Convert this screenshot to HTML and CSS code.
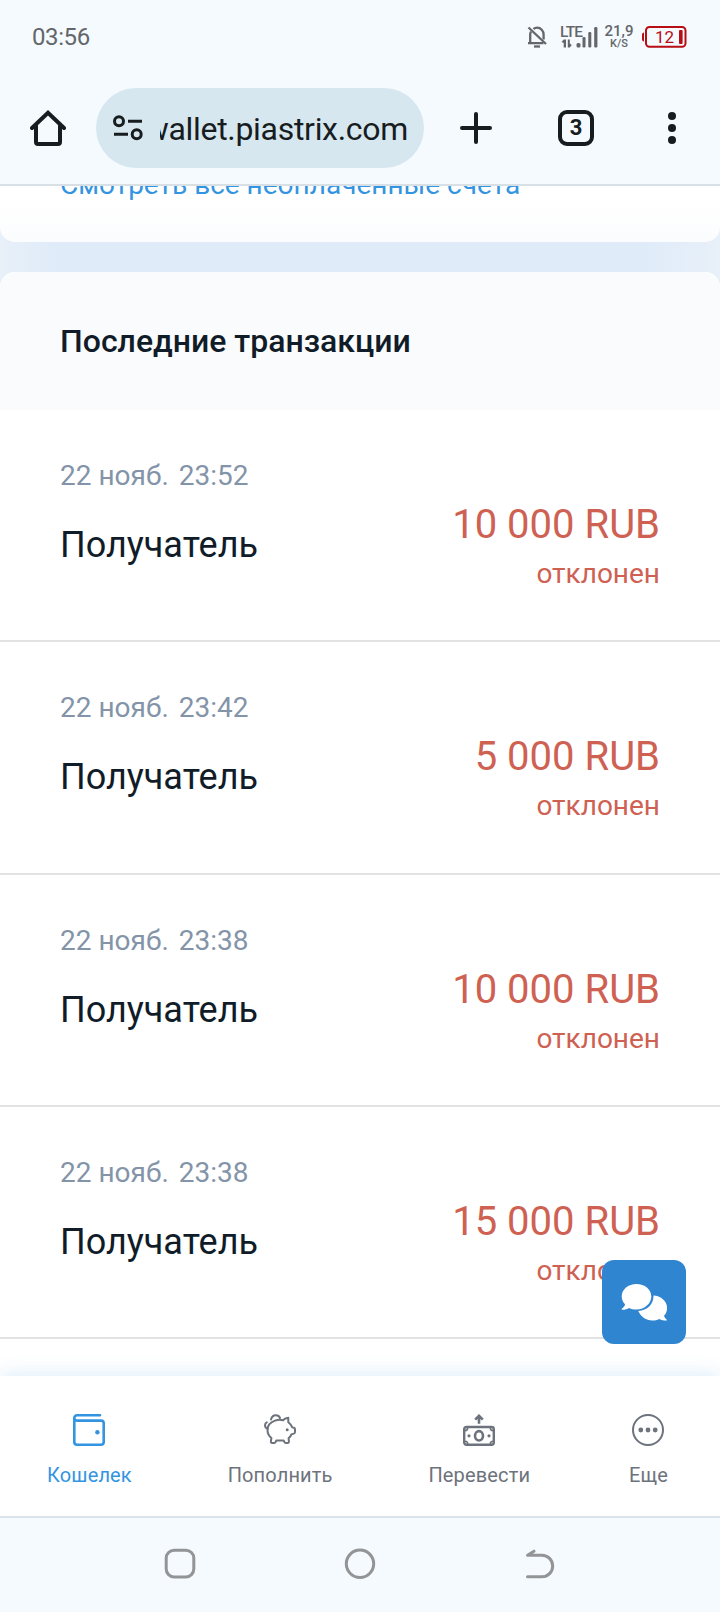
FILE: index.html
```html
<!DOCTYPE html>
<html lang="ru">
<head>
    <meta charset="UTF-8">
    <meta name="viewport" content="width=device-width, initial-scale=1.0">
    <title>Piastrix</title>
    <link rel="stylesheet" href="styles.css">
</head>
<body>
    <div class="phone">
        <div class="status-bar">
            <span class="clock">03:56</span>
            <div class="status-icons">
                <svg class="bell" width="20" height="22" viewBox="0 0 20 22" fill="none" stroke="#646669" stroke-width="2.300">
                    <path d="M1 17.200h15.500M3.200 17V8.500c0-1 .3-2 .8-2.800M6.500 3C7.500 2.200 8.600 1.700 10 1.700c3.800 0 6.600 3 6.600 6.800v5"/>
                    <path d="M1.500 1.500l17.500 16.500"/>
                    <path d="M7 20.500h6"/>
                </svg>
                <div class="lte">
                    <span class="lte-label">LTE</span>
                    <svg width="37" height="22" viewBox="0 0 37 22" fill="#646669">
                        <path d="M2.700 13.500h2.300v8H2.700zM.5 16l2.200-2.500V17zM6.800 13.500h2v8h-2zM8.800 21.500V17.500l2 1.500z"/>
                        <rect x="15.500" y="17" width="4" height="4.500" rx="1.500"/>
                        <rect x="21.500" y="11" width="3" height="10.500" rx="1.200"/>
                        <rect x="27.300" y="6" width="3" height="15.500" rx="1.200"/>
                        <rect x="33.200" y="1" width="3.200" height="20.500" rx="1.200"/>
                    </svg>
                </div>
                <div class="speed">
                    <span class="speed-value">21,9</span>
                    <span class="speed-unit">K/S</span>
                </div>
                <div class="battery">
                    <svg width="46" height="22" viewBox="0 0 46 22" fill="none">
                        <rect x="5" y="1" width="39.500" height="19.800" rx="3.500" stroke="#b80d12" stroke-width="2"/>
                        <path d="M3 6.500C1.500 6.500 1 7.500 1 9v4c0 1.500.5 2.500 2 2.500z" fill="#b80d12"/>
                        <rect x="38" y="4" width="3.600" height="14" rx="1" fill="#b80d12"/>
                    </svg>
                    <span class="battery-level">12</span>
                </div>
            </div>
        </div>

        <div class="toolbar">
            <svg class="home" width="36" height="36" viewBox="0 0 36 36" fill="none" stroke="#171c1f" stroke-width="4" stroke-linejoin="round" stroke-linecap="round">
                <path d="M6 16v16a2 2 0 0 0 2 2h20a2 2 0 0 0 2-2V16" />
                <path d="M2 18L18 2.800 34 18" stroke-linejoin="miter"/>
            </svg>
            <div class="address">
                <svg width="32" height="26" viewBox="0 0 32 26" fill="none" stroke="#171c1f">
                    <circle cx="7" cy="6.300" r="4.500" stroke-width="3"/>
                    <path d="M16 6.300h14M2 19.300h14" stroke-width="3"/>
                    <circle cx="24.700" cy="19.300" r="4.500" stroke-width="3"/>
                </svg>
                <div class="url"><span>wallet.piastrix.com</span></div>
            </div>
            <svg class="plus" width="32" height="32" viewBox="0 0 32 32" stroke="#171c1f" stroke-width="4" stroke-linecap="round">
                <path d="M2 16h28M16 2v28"/>
            </svg>
            <div class="tabs">3</div>
            <svg class="dots" width="8" height="32" viewBox="0 0 8 32" fill="#171c1f">
                <circle cx="4" cy="4" r="4"/>
                <circle cx="4" cy="16" r="4"/>
                <circle cx="4" cy="28" r="4"/>
            </svg>
        </div>

        <div class="content">
            <div class="card invoices">
                <a class="invoices-link">Смотреть все неоплаченные счета</a>
            </div>
            <div class="card transactions">
                <h2>Последние транзакции</h2>
                <div class="row">
                    <div class="info">
                        <div class="date"><span>22 нояб.</span> <span>23:52</span></div>
                        <div class="name">Получатель</div>
                    </div>
                    <div class="sum">
                        <div class="amount">10 000 RUB</div>
                        <div class="state">отклонен</div>
                    </div>
                </div>
                <div class="row">
                    <div class="info">
                        <div class="date"><span>22 нояб.</span> <span>23:42</span></div>
                        <div class="name">Получатель</div>
                    </div>
                    <div class="sum">
                        <div class="amount">5 000 RUB</div>
                        <div class="state">отклонен</div>
                    </div>
                </div>
                <div class="row">
                    <div class="info">
                        <div class="date"><span>22 нояб.</span> <span>23:38</span></div>
                        <div class="name">Получатель</div>
                    </div>
                    <div class="sum">
                        <div class="amount">10 000 RUB</div>
                        <div class="state">отклонен</div>
                    </div>
                </div>
                <div class="row">
                    <div class="info">
                        <div class="date"><span>22 нояб.</span> <span>23:38</span></div>
                        <div class="name">Получатель</div>
                    </div>
                    <div class="sum">
                        <div class="amount">15 000 RUB</div>
                        <div class="state">отклонен</div>
                    </div>
                </div>
            </div>
            <!-- support chat -->
            <div class="chat">
                <svg width="46" height="38" viewBox="0 0 46 38" fill="#fff">
                    <path d="M15.500 1C7.300 1 .7 6.500 .7 13.400c0 3 1.300 5.800 3.400 7.900-.6 2-1.700 3.300-3.100 4.300-.8.6-.4 1.200.5 1.200 2.700 0 4.800-.8 6.600-1.900 2.200 1 4.700 1.500 7.400 1.500 8.200 0 14.800-5.800 14.800-12.900S23.700 1 15.500 1z"/>
                    <path d="M32.500 12.500c.3 9-6 14.700-15.200 15.600 2.500 5.800 7.800 9.400 14 9.400 2.500 0 4.800-.6 6.900-1.600 2.200 1.100 4.400 1.700 7 1.700.8 0 1-.7.400-1.200-1.300-.9-2.200-2-2.600-3.600 2-2.200 3.100-4.900 3.100-7.900 0-6.500-6-12-13.600-12.400z"/>
                </svg>
            </div>
        </div>

        <div class="menu">
            <div class="menu-item active">
                <svg width="32" height="32" viewBox="0 0 32 32" fill="none" stroke="currentColor" stroke-width="2.600" stroke-linecap="round">
                    <path d="M27 1.300H4A2.700 2.700 0 0 0 1.300 4v24A2.700 2.700 0 0 0 4 30.700h24a2.700 2.700 0 0 0 2.700-2.700V9.300A2.700 2.700 0 0 0 28 6.600H4A2.700 2.700 0 0 1 1.300 4"/>
                    <circle cx="24.400" cy="18.200" r="2.200" fill="currentColor" stroke="none"/>
                </svg>
                <span>Кошелек</span>
            </div>
            <div class="menu-item">
                <svg width="32" height="32" viewBox="0 0 32 32" fill="none" stroke="currentColor" stroke-width="2" stroke-linecap="round" stroke-linejoin="round">
                    <path d="M19 6.200c-2.200-.6-5.500-.5-8 .4-4.200 1.400-7.500 4.800-7.500 9.400 0 3.300 1.500 6 3.900 8l-.5 3.200c-.2 1.200.4 1.800 1.400 1.800h1.900c.7 0 1.200-.4 1.500-1.100l.7-1.500h7.200l.7 1.500c.3.700.8 1.100 1.500 1.100h1.700c1 0 1.500-.6 1.400-1.500l-.3-3.300c1.500-1 2.300-2.200 2.800-3.800l2.400-.8c.8-.3 1.200-.8 1.200-1.600v-2.800c0-.8-.4-1.200-1.200-1.400l-1.500-.4c-.9-2.300-2.200-3.900-4-5.200V3.800c-2.300.4-4.200 1.200-5.300 2.400z"/>
                    <path d="M7 5.600C7.700 2.800 9.200 1.300 11.700 1.300c2 0 3.600 1 4.300 2.700"/>
                    <path d="M3.600 14.800C1.800 14.200 1 12.700 1 11.200c0-1.300.6-2.300 1.800-2.900"/>
                    <circle cx="23.200" cy="15.700" r="1.500" fill="currentColor" stroke="none"/>
                </svg>
                <span>Пополнить</span>
            </div>
            <div class="menu-item">
                <svg width="32" height="32" viewBox="0 0 32 32" fill="none" stroke="currentColor" stroke-width="2.400">
                    <rect x="1.200" y="13" width="29.600" height="17.800" rx="2.200"/>
                    <path d="M2 16.600c1.700 0 2.700-1.100 2.700-2.900M30 16.600c-1.700 0-2.700-1.100-2.700-2.900M2 27.200c1.700 0 2.700 1.100 2.700 2.900M30 27.200c-1.700 0-2.700 1.100-2.700 2.900" stroke-width="1.600"/>
                    <ellipse cx="16" cy="21.800" rx="4" ry="4.700" stroke-width="2.600"/>
                    <path d="M16 9.800V2.200M12.200 5.600L16 1.800l3.800 3.800" stroke-width="2.600"/>
                    <circle cx="6" cy="21.800" r="1.600" fill="currentColor" stroke="none"/>
                    <circle cx="26" cy="21.800" r="1.600" fill="currentColor" stroke="none"/>
                </svg>
                <span>Перевести</span>
            </div>
            <div class="menu-item">
                <svg width="32" height="32" viewBox="0 0 32 32" fill="currentColor">
                    <circle cx="16" cy="16" r="15" fill="none" stroke="currentColor" stroke-width="2"/>
                    <circle cx="8.800" cy="16" r="2.400"/>
                    <circle cx="16" cy="16" r="2.400"/>
                    <circle cx="23.200" cy="16" r="2.400"/>
                </svg>
                <span>Еще</span>
            </div>
        </div>

        <div class="system-nav">
            <svg width="32" height="32" viewBox="0 0 32 32" fill="none" stroke="#929496" stroke-width="3">
                <rect x="2.200" y="2.200" width="27.600" height="26.800" rx="8"/>
            </svg>
            <svg width="32" height="32" viewBox="0 0 32 32" fill="none" stroke="#929496" stroke-width="3">
                <circle cx="16" cy="15.800" r="13.700"/>
            </svg>
            <svg width="32" height="32" viewBox="0 0 32 32" fill="none" stroke="#929496" stroke-width="3" stroke-linecap="round" stroke-linejoin="round">
                <path d="M10 3.200L3.500 7.300H18a10.700 10.700 0 0 1 0 21.400H3.500"/>
            </svg>
        </div>
    </div>
</body>
</html>
```
FILE: styles.css
```css
body {
    margin: 0;
    font-family: Roboto, "Liberation Sans", sans-serif;
    background-color: #fff;
}
svg {
    display: block;
    flex-shrink: 0;
}
.phone {
    display: flex;
    flex-direction: column;
    width: 720px;
    height: 1612px;
    overflow: hidden;
}

/* status bar */
.status-bar {
    display: flex;
    justify-content: space-between;
    align-items: center;
    height: 72px;
    padding: 1px 33px 0 32px;
    box-sizing: border-box;
    background-color: #f5faff;
    color: #646669;
}
.clock {
    font-size: 24px;
    line-height: 28px;
    letter-spacing: -0.4px;
}
.status-icons {
    display: flex;
    align-items: center;
}
.lte {
    position: relative;
    margin-left: 14px;
}
.lte-label {
    position: absolute;
    left: -1px;
    top: 0;
    font-size: 15.5px;
    line-height: 12px;
    font-weight: 500;
    letter-spacing: -0.8px;
}
.speed {
    display: flex;
    flex-direction: column;
    align-items: center;
    width: 28px;
    margin-left: 7px;
}
.speed-value {
    font-size: 15px;
    line-height: 13px;
    font-weight: 500;
}
.speed-unit {
    font-size: 11px;
    line-height: 11px;
    font-weight: 500;
}
.battery {
    position: relative;
    margin-left: 8px;
}
.battery-level {
    position: absolute;
    left: 14px;
    top: 2px;
    font-size: 17px;
    line-height: 19px;
    color: #b80d12;
}

/* browser toolbar */
.toolbar {
    display: flex;
    align-items: center;
    height: 114px;
    padding: 0 44px 0 30px;
    box-sizing: border-box;
    border-bottom: 2px solid #d9e0e5;
    background-color: #f5faff;
}
.address {
    display: flex;
    align-items: center;
    width: 328px;
    height: 80px;
    margin-left: 30px;
    padding: 0 16px;
    box-sizing: border-box;
    border-radius: 40px;
    background-color: #d7e7ef;
}
.url {
    display: flex;
    justify-content: flex-end;
    flex: 1;
    margin: 2px 0 0 16px;
    overflow: hidden;
    font-size: 32px;
    line-height: 40px;
    letter-spacing: -0.3px;
    color: #171c1f;
}
.plus {
    margin-left: 36px;
}
.tabs {
    width: 36px;
    height: 36px;
    margin-left: 66px;
    box-sizing: border-box;
    border: 4px solid #171c1f;
    border-radius: 9px;
    font-size: 22px;
    line-height: 28px;
    font-weight: 700;
    text-align: center;
    color: #171c1f;
}
.dots {
    margin-left: 74px;
}

/* page */
.content {
    position: relative;
    flex: 1;
    overflow: hidden;
    background: linear-gradient(90deg, #e8f0f9, #dfebf9 60px, #dfebf9 640px, #e8f0f9);
}
.invoices {
    height: 56px;
    margin-bottom: 30px;
    padding-left: 60px;
    border-radius: 0 0 15px 15px;
    background: linear-gradient(#fff 20px, #fbfcfe);
}
.invoices-link {
    display: block;
    position: relative;
    top: -18px;
    font-size: 28px;
    line-height: 34px;
    color: #3394e1;
}
.transactions {
    min-height: 1104px;
    border-radius: 15px 15px 0 0;
    overflow: hidden;
    background-color: #fff;
}
h2 {
    height: 138px;
    margin: 0;
    padding: 0 60px;
    font-size: 32px;
    line-height: 138px;
    font-weight: 500;
    color: #111c29;
    background-color: #fafbfd;
}
.row {
    display: flex;
    justify-content: space-between;
    height: 232.33px;
    padding: 49px 60px 0;
    box-sizing: border-box;
    border-bottom: 2px solid #e1e2e3;
}
.date {
    font-size: 28px;
    line-height: 34px;
    color: #8494a8;
}
.date span + span {
    margin-left: 3px;
}
.name {
    margin-top: 30px;
    font-size: 36px;
    line-height: 44px;
    color: #111c29;
}
.sum {
    padding-top: 43px;
    text-align: right;
    color: #cf6152;
}
.amount {
    font-size: 40px;
    line-height: 46px;
}
.state {
    margin-top: 9px;
    font-size: 28px;
    line-height: 34px;
}
.chat {
    display: flex;
    align-items: center;
    justify-content: center;
    position: absolute;
    right: 34px;
    bottom: 32px;
    width: 84px;
    height: 84px;
    border-radius: 12px;
    background-color: #2f85d0;
}

/* bottom menu */
.menu {
    display: flex;
    justify-content: space-between;
    position: relative;
    height: 142px;
    padding: 38px 49px 0 47px;
    box-sizing: border-box;
    border-bottom: 2px solid #dae2ea;
    background-color: #fff;
    box-shadow: 0 0 20px rgba(51, 148, 225, 0.2);
}
.menu-item {
    display: flex;
    flex-direction: column;
    align-items: center;
    gap: 17px;
    min-width: 45px;
    font-size: 20px;
    line-height: 24px;
    letter-spacing: 0.15px;
    color: #6d737c;
}
.menu-item.active {
    color: #3394e1;
}

/* android buttons */
.system-nav {
    display: flex;
    justify-content: center;
    position: relative;
    gap: 148px;
    height: 94px;
    padding-top: 30px;
    box-sizing: border-box;
    background-color: #f5faff;
}
```
